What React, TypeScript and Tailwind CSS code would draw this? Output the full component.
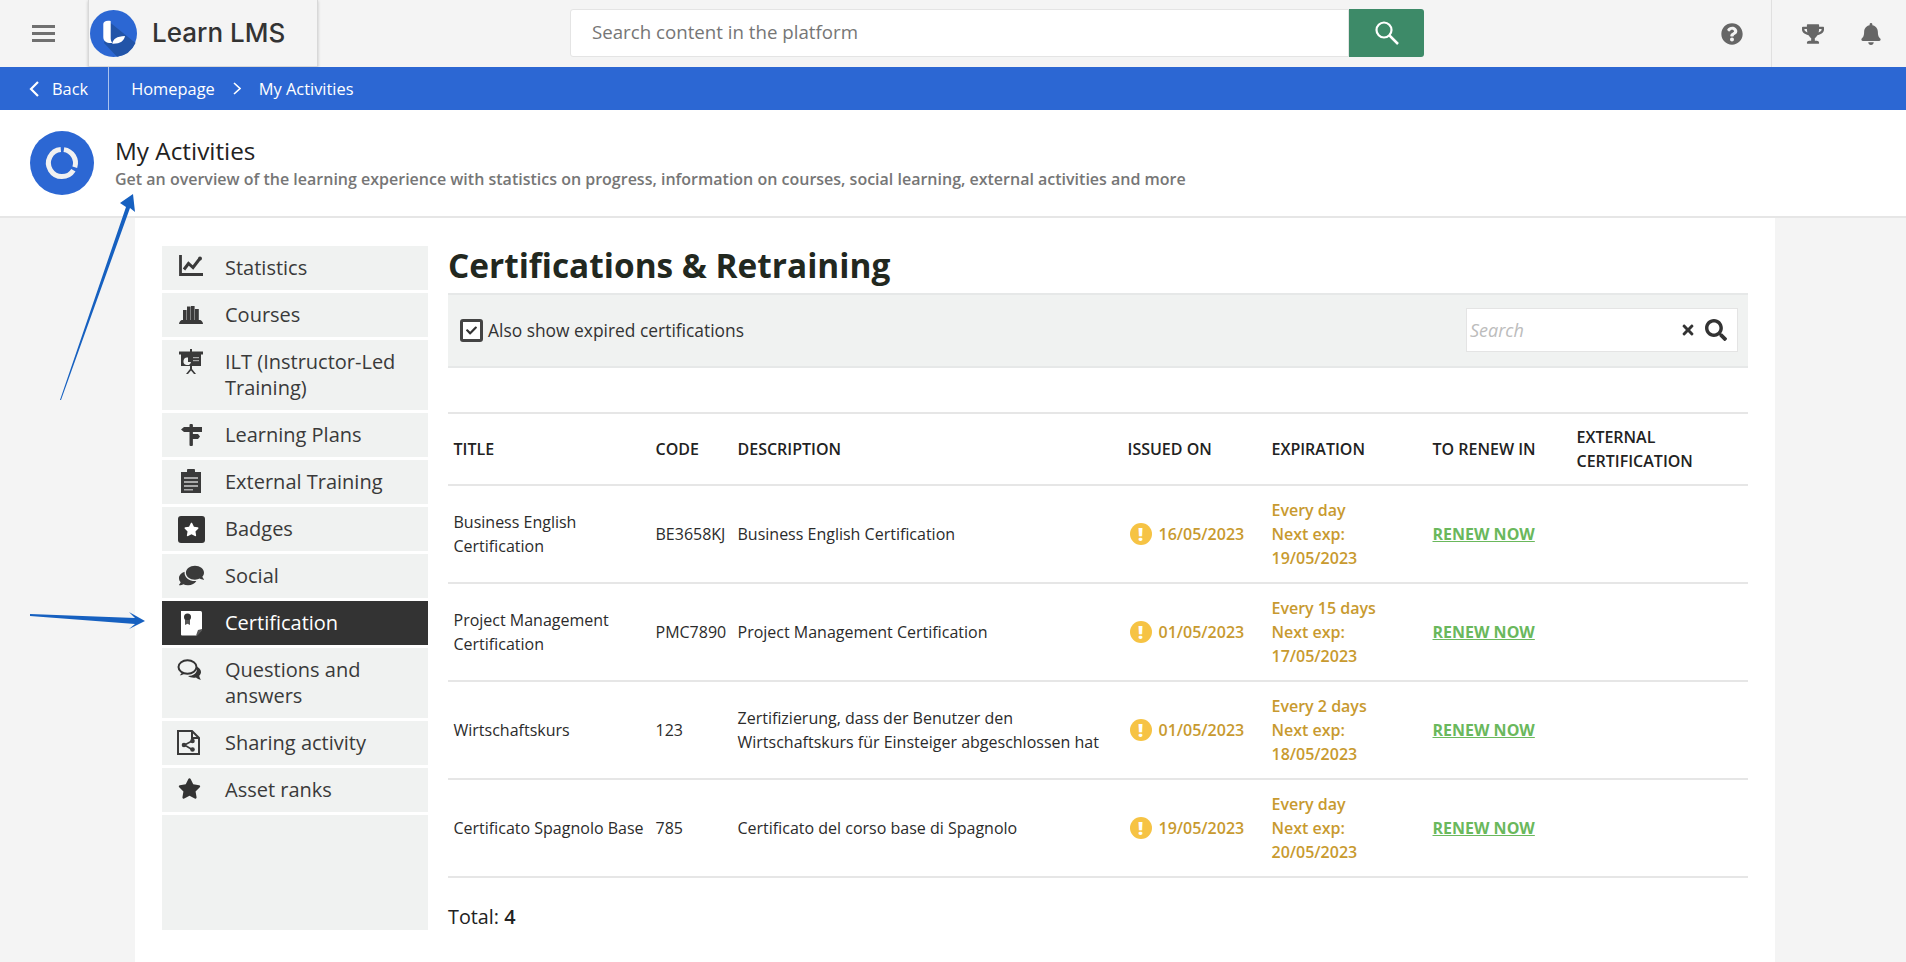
import React from "react";
import { FaQuestionCircle, FaTrophy, FaBell, FaStar, FaComments, FaTimes, FaSearch, FaCheck } from "react-icons/fa";

function IconStats() {
  return (
    <svg width="24" height="21" viewBox="0 0 24 21" fill="none" stroke="#3a3a3a" strokeWidth="2.800">
      <path d="M1.500 0v19.500H24" />
      <path d="M5 14.500 9.500 8.500l4.500 4L20.500 4" strokeWidth="3" />
      <circle cx="21" cy="3.500" r="2" fill="#3a3a3a" stroke="none" />
    </svg>
  );
}
function IconBooks() {
  return (
    <svg width="24" height="18" viewBox="0 0 24 18" fill="#3a3a3a">
      <path d="M0 18c0-2 2-4 3-4h18c1 0 3 2 3 4z" />
      <rect x="4" y="4" width="3.600" height="11" />
      <rect x="8" y="0.500" width="3.600" height="14" />
      <rect x="12" y="0" width="3.600" height="15" />
      <rect x="16" y="3" width="3.800" height="12" />
    </svg>
  );
}
function IconBoard() {
  return (
    <svg width="24" height="25" viewBox="0 0 24 25" fill="#3a3a3a">
      <rect x="11" y="0" width="2" height="3" />
      <rect x="0" y="2.500" width="24" height="3" />
      <rect x="2" y="5" width="20" height="12" />
      <path d="M9 8.500a3.800 3.800 0 1 0 3 4.500H9z" fill="#f0f2f1" />
      <rect x="14" y="8" width="6" height="1.200" fill="#a9aaaa" />
      <rect x="14" y="11" width="6" height="1.200" fill="#a9aaaa" />
      <path d="M11 17h2v3l4 5h-2l-3-3.500L9 25H7l4-5z" />
    </svg>
  );
}
function IconSign() {
  return (
    <svg width="21" height="22" viewBox="0 0 21 22" fill="#3a3a3a">
      <rect x="8.500" y="0" width="3.400" height="22" rx="1" />
      <path d="M3 3h18v5H3L0 5.500z" />
      <path d="M10 10h7l2 2.500-2 2.500h-7z" />
    </svg>
  );
}
function IconClipboard() {
  return (
    <svg width="20" height="24" viewBox="0 0 20 24">
      <path d="M0 3h6V2a4 4 0 0 1 8 0v1h6v21H0z" fill="#3a3a3a" />
      <rect x="3" y="8" width="14" height="2" fill="#a8a8a8" />
      <rect x="3" y="12" width="14" height="2" fill="#a8a8a8" />
      <rect x="3" y="16" width="14" height="2" fill="#a8a8a8" />
      <rect x="3" y="20" width="9" height="1.500" fill="#a8a8a8" />
    </svg>
  );
}
function IconBadge() {
  return (
    <span className="flex h-[27px] w-[27px] items-center justify-center rounded-[3px] bg-[#333333]">
      <FaStar className="text-[15px] text-white" />
    </span>
  );
}
function IconCert() {
  return (
    <svg width="23" height="26" viewBox="0 0 23 26">
      <path d="M1 1h19.500a1.500 1.500 0 0 1 1.500 1.500V20l-5.500 5.500H2a1 1 0 0 1-1-1z" fill="#ffffff" />
      <circle cx="7.500" cy="7" r="3.500" fill="#333333" />
      <path d="M5 10h5v5l-2.500-1.200L5 15z" fill="#555555" />
      <path d="M22 19v1.500l-4.500 5h-1.500l2-5.500z" fill="#555555" />
    </svg>
  );
}
function IconQA() {
  return (
    <svg width="25" height="22" viewBox="0 0 25 22">
      <path d="M19.500 7.500c2.500 1 4.500 3 4.500 5.500 0 1.500-.7 2.800-1.800 3.800.2 1.500 1 3 1.800 4-2-.3-4-1.400-5-2.400-3 .6-6 0-8-1.400 5.500 0 9-3 9-7z" fill="#333333" />
      <ellipse cx="10.500" cy="8" rx="9" ry="6.800" fill="#f0f2f1" stroke="#333333" strokeWidth="2" />
      <path d="M5 13c-.3 1.200-1 2.300-2.200 3.300 1.700 0 3.500-.7 4.700-1.500z" fill="#333333" />
    </svg>
  );
}
function IconShare() {
  return (
    <svg width="23" height="25" viewBox="0 0 23 25" fill="none" stroke="#3a3a3a" strokeWidth="2">
      <path d="M1 1h14l7 7v16H1z" />
      <path d="M15 1v7h7" />
      <path d="M7.500 15 15 11M7.500 15 15 19.500" strokeWidth="1.500" />
      <circle cx="7" cy="15" r="2.300" fill="#3a3a3a" stroke="none" />
      <circle cx="15.500" cy="11" r="2.300" fill="#3a3a3a" stroke="none" />
      <circle cx="15.500" cy="19.500" r="2.300" fill="#3a3a3a" stroke="none" />
    </svg>
  );
}

const nav: { label: string; icon: React.ReactNode; active?: boolean }[] = [
  { label: "Statistics", icon: <IconStats /> },
  { label: "Courses", icon: <span className="pt-[4px]"><IconBooks /></span> },
  { label: "ILT (Instructor-Led Training)", icon: <IconBoard /> },
  { label: "Learning Plans", icon: <span className="pt-[2px]"><IconSign /></span> },
  { label: "External Training", icon: <IconClipboard /> },
  { label: "Badges", icon: <IconBadge /> },
  { label: "Social", icon: <FaComments className="-scale-x-100 text-[25px] text-[#3a3a3a]" /> },
  { label: "Certification", icon: <IconCert />, active: true },
  { label: "Questions and answers", icon: <span className="-ml-[3px] pt-[2px]"><IconQA /></span> },
  { label: "Sharing activity", icon: <span className="-ml-[5px]"><IconShare /></span> },
  { label: "Asset ranks", icon: <FaStar className="-ml-[4px] text-[23px] text-[#333333]" /> },
];

const rows = [
  { t: "Business English Certification", c: "BE3658KJ", d: "Business English Certification", i: "16/05/2023", e: "Every day", n: "19/05/2023" },
  { t: "Project Management Certification", c: "PMC7890", d: "Project Management Certification", i: "01/05/2023", e: "Every 15 days", n: "17/05/2023" },
  { t: "Wirtschaftskurs", c: "123", d: "Zertifizierung, dass der Benutzer den Wirtschaftskurs für Einsteiger abgeschlossen hat", i: "01/05/2023", e: "Every 2 days", n: "18/05/2023" },
  { t: "Certificato Spagnolo Base", c: "785", d: "Certificato del corso base di Spagnolo", i: "19/05/2023", e: "Every day", n: "20/05/2023" },
];

const th = "pl-[5.500px] pr-[5.500px] text-left align-middle font-semibold";
const td = "pl-[5.500px] pr-[5.500px] align-middle";

export default function App() {
  return (
    <div className="relative flex h-screen flex-col overflow-hidden bg-[#f4f4f4] font-['Open_Sans',sans-serif] text-[#222]">
      {/* top bar */}
      <header className="flex h-[67px] shrink-0 items-center">
        <button className="ml-[32px] flex w-[23px] flex-col gap-[4px]">
          <span className="h-[3px] bg-[#707070]" />
          <span className="h-[3px] bg-[#707070]" />
          <span className="h-[3px] bg-[#707070]" />
        </button>
        <div className="ml-[33px] flex h-[67px] w-[230px] items-center border-x border-b border-[#d8d8d8] shadow-[0_1px_3px_rgba(0,0,0,0.2)]">
          <svg width="47" height="47" viewBox="0 0 47 47" className="ml-[1px]">
            <circle cx="23.500" cy="23.500" r="23.500" fill="#2c67d3" />
            <path d="M20.700 13 45.500 33A23.500 23.500 0 0 1 27 46.800L14 33z" fill="#2254a8" />
            <path d="M13.300 14c0-2.500 3-4 7.400-3v17c0 2 .5 3.500 1.500 5-5 .5-8.900-1.500-8.900-6z" fill="#fff" />
            <path d="M22.300 33.700c.5-4.500 4.500-7.500 12.700-7.700-1 5-5 8-12.700 7.700z" fill="#fff" />
          </svg>
          <span className="ml-[15px] font-['Inter',sans-serif] text-[26px] leading-none font-medium text-[#333333]">Learn LMS</span>
        </div>
        <div className="mb-[2px] ml-[252px] flex h-[48px] w-[854px]">
          <div className="flex flex-1 items-center rounded-l-[3px] border border-[#e4e4e4] bg-white pl-[21px] text-[18.700px] text-[#767676]">
            Search content in the platform
          </div>
          <div className="flex w-[75px] items-center justify-center rounded-r-[3px] bg-[#3d8a68]">
            <svg width="24" height="24" viewBox="0 0 24 24" fill="none" stroke="#fff" strokeWidth="2.200">
              <circle cx="9" cy="9" r="7.500" />
              <path d="m14.500 14.500 8.500 8.500" strokeWidth="2.500" />
            </svg>
          </div>
        </div>
        <FaQuestionCircle className="ml-[297px] text-[22px] text-[#666]" />
        <div className="ml-[28px] h-[67px] w-px bg-[#e0e0e0]" />
        <FaTrophy className="ml-[30px] text-[22px] text-[#666]" />
        <FaBell className="ml-[36px] text-[22px] text-[#666]" />
      </header>

      {/* breadcrumb */}
      <nav className="flex h-[43px] shrink-0 items-center bg-[#2c67d3] text-[16.400px] font-medium text-white">
        <svg width="11" height="16" viewBox="0 0 11 16" className="ml-[29px]" fill="none" stroke="#fff" strokeWidth="2.200">
          <path d="M9 1 2 8l7 7" />
        </svg>
        <span className="ml-[12px] pt-[1px]">Back</span>
        <span className="ml-[20px] h-[43px] w-px bg-[#a9c2ee]" />
        <span className="ml-[22px] pt-[1px]">Homepage</span>
        <svg width="8" height="13" viewBox="0 0 8 13" className="ml-[18px]" fill="none" stroke="#fff" strokeWidth="1.600">
          <path d="m1 1 6 5.500L1 12" />
        </svg>
        <span className="ml-[18px] pt-[1px]">My Activities</span>
      </nav>

      {/* page header */}
      <section className="flex h-[108px] shrink-0 items-center border-b-2 border-[#e6e6e6] bg-white pl-[30px]">
        <svg width="64" height="64" viewBox="0 0 64 64" fill="none" stroke="#f1f1f1" strokeWidth="5">
          <circle cx="32" cy="32" r="32" fill="#2c67d3" stroke="none" />
          <path d="M33.900 18.600A13.500 13.500 0 0 1 44.800 36.200" />
          <path d="M43.400 39.200A13.500 13.500 0 1 1 30.800 18.600" />
        </svg>
        <div className="ml-[21px]">
          <h1 className="text-[24.300px] leading-[30px] font-normal text-[#222]">My Activities</h1>
          <p className="mt-[2px] text-[16px] leading-[22px] font-semibold text-[#767676]">
            Get an overview of the learning experience with statistics on progress, information on courses, social learning, external activities and more
          </p>
        </div>
      </section>

      {/* main */}
      <main className="ml-[135px] flex min-h-0 w-[1640px] flex-1 bg-white pt-[28px] pr-[27px] pb-[32px] pl-[27px]">
        <aside className="flex w-[266px] shrink-0 flex-col gap-[3px]">
          {nav.map((n, i) => (
            <div
              key={i}
              className={
                n.active
                  ? "flex bg-[#333333] py-[9px] text-[20px] leading-[26px] text-white"
                  : "flex bg-[#f0f2f1] py-[9px] text-[20px] leading-[26px] text-[#3a3a3a]"
              }
            >
              <span className="mr-[5px] flex h-[26px] w-[58px] shrink-0 items-start justify-center">{n.icon}</span>
              <span className="pr-[12px]">{n.label}</span>
            </div>
          ))}
          <div className="flex-1 bg-[#f0f2f1]" />
        </aside>

        <div className="ml-[20px] flex w-[1300px] flex-col">
          <h2 className="h-[51px] text-[33.400px] leading-[39px] font-bold text-[#22281f]">Certifications &amp; Retraining</h2>
          <div className="flex h-[75px] shrink-0 items-center justify-between border-y-2 border-[#e6e8e8] bg-[#f0f2f1] pr-[10px] pl-[12px]">
            <label className="flex items-center gap-[5px] text-[17.400px] text-[#333]">
              <span className="flex h-[23px] w-[23px] items-center justify-center rounded-[3px] border-[3px] border-[#444] bg-white">
                <FaCheck className="text-[11px] text-[#333]" />
              </span>
              Also show expired certifications
            </label>
            <div className="mb-[1px] flex h-[44px] w-[272px] items-center border border-[#e4e4e4] bg-white pr-[10px] pl-[3px]">
              <span className="flex-1 text-[18px] text-[#bcbcbc] italic">Search</span>
              <FaTimes className="text-[16px] text-[#333]" />
              <FaSearch className="ml-[9px] text-[22px] text-[#333]" />
            </div>
          </div>

          <table className="mt-[44px] w-[1300px] table-fixed border-collapse text-[16px] leading-[24px] text-[#2b2b2b]">
            <thead>
              <tr className="h-[72px] border-y-2 border-[#e6e6e6] text-[#222]">
                <th className={th + " w-[202px]"}>TITLE</th>
                <th className={th + " w-[82px]"}>CODE</th>
                <th className={th + " w-[390px]"}>DESCRIPTION</th>
                <th className={th + " w-[144px]"}>ISSUED ON</th>
                <th className={th + " w-[161px]"}>EXPIRATION</th>
                <th className={th + " w-[144px]"}>TO RENEW IN</th>
                <th className={th}>EXTERNAL CERTIFICATION</th>
              </tr>
            </thead>
            <tbody>
              {rows.map((r, idx) => (
                <tr key={r.c} className="h-[98px] border-b-2 border-[#e6e6e6]">
                  <td className={idx === 3 ? "pl-[5.500px] align-middle whitespace-nowrap" : td}>{r.t}</td>
                  <td className={td}>{r.c}</td>
                  <td className={td}>{r.d}</td>
                  <td className={td}>
                    <span className="ml-[2px] flex items-center gap-[7px] font-semibold text-[#c89a2f]">
                      <span className="flex h-[22px] w-[22px] shrink-0 items-center justify-center rounded-full bg-[#f6c344] text-[18px] leading-none font-extrabold text-white">!</span>
                      {r.i}
                    </span>
                  </td>
                  <td className={td + " font-semibold text-[#c89a2f]"}>
                    {r.e}
                    <br />
                    Next exp:
                    <br />
                    {r.n}
                  </td>
                  <td className={td}>
                    <span className="font-bold text-[#6ab85c] underline">RENEW NOW</span>
                  </td>
                  <td className={td} />
                </tr>
              ))}
            </tbody>
          </table>
          <div className="mt-[26px] text-[19.800px] leading-[26px] text-[#222]">
            Total: <span className="font-semibold">4</span>
          </div>
        </div>
      </main>

      {/* annotation arrows */}
      <svg className="pointer-events-none absolute top-0 left-0" width="1906" height="962" viewBox="0 0 1906 962">
        <polygon points="60,400 126,207 120,203 133,194 135,212 130,208 61,400" fill="#1660c0" />
        <polygon points="30,614 135,618 129,612 145,621 129,629 135,624 30,616" fill="#1660c0" />
      </svg>
    </div>
  );
}
